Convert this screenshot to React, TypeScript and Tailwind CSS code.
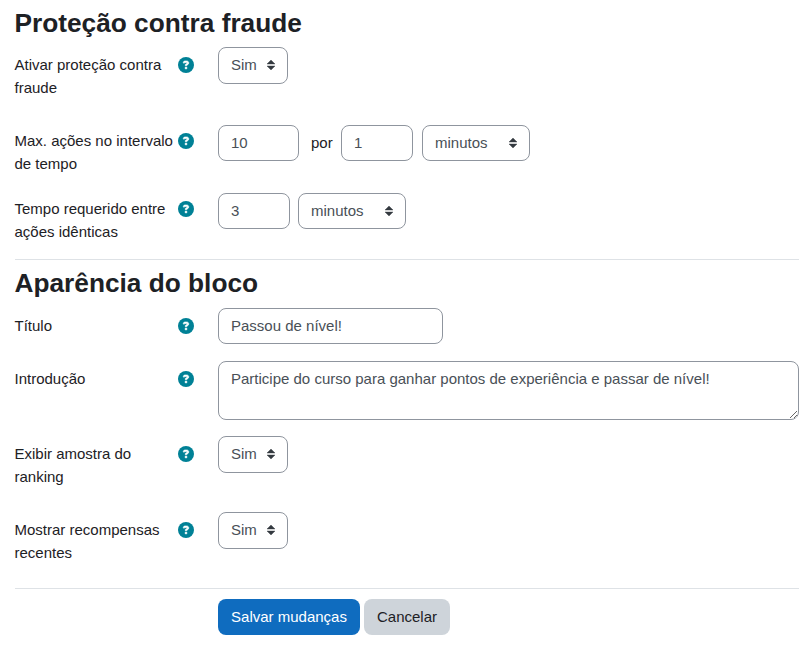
import React from "react";

const control =
  "h-[36px] shrink-0 rounded-lg border border-[#8f959e] bg-white px-3 text-[15px] leading-[22px] text-[#495057] outline-none";

function Help() {
  return (
    <svg viewBox="0 0 512 512" className="mt-1 h-4 w-4 shrink-0" aria-label="Ajuda">
      <circle cx="256" cy="256" r="256" fill="#008196" />
      <path
        fill="#fff"
        stroke="#fff"
        strokeWidth="20"
        d="M169.800 165.300c7.900-22.300 29.100-37.300 52.800-37.300h58.300c34.900 0 63.100 28.300 63.100 63.100c0 22.600-12.100 43.500-31.700 54.800L280 264.400c-.2 13-10.900 23.600-24 23.600c-13.300 0-24-10.700-24-24V250.500c0-8.600 4.600-16.500 12.100-20.800l44.300-25.400c4.700-2.700 7.600-7.700 7.600-13.100c0-8.400-6.800-15.100-15.100-15.100H222.600c-3.400 0-6.400 2.100-7.500 5.300l-.4 1.200c-4.400 12.500-18.200 19-30.600 14.600s-19-18.200-14.600-30.600l.3-1.300zM224 352a32 32 0 1 1 64 0 32 32 0 1 1-64 0z"
      />
    </svg>
  );
}

function Select({ value, className }: { value: string; className: string }) {
  return (
    <button type="button" className={`${control} flex items-center justify-between ${className}`}>
      {value}
      <svg viewBox="0 0 4 5" className="h-[10px] w-2 overflow-visible">
        <path fill="#343a40" stroke="#343a40" strokeWidth="0.2" strokeLinejoin="round" d="M2 0 0 2h4zm0 5L0 3h4z" />
      </svg>
    </button>
  );
}

function Row({
  label,
  className,
  labelPad = "pt-[6px]",
  children,
}: {
  label: string[];
  className: string;
  labelPad?: string;
  children: React.ReactNode;
}) {
  return (
    <div className={`flex items-start ${className}`}>
      <div className={`flex w-[203.500px] shrink-0 ${labelPad}`}>
        <div className="w-[163.500px] shrink-0 whitespace-nowrap text-[15px] leading-[23px]">
          {label.map((line) => (
            <div key={line}>{line}</div>
          ))}
        </div>
        <Help />
      </div>
      {children}
    </div>
  );
}

export default function App() {
  return (
    <main className="h-[653px] w-[811px] overflow-hidden bg-white pl-[14.500px] pr-3 font-['Liberation_Sans',Arial,sans-serif] text-[15px] text-[#1d2125]">
      <section className="h-[260px] border-b border-[#dee2e6] pt-[7px]">
        <h2 className="h-10 text-[26.250px] font-bold leading-8">Proteção contra fraude</h2>
        <Row label={["Ativar proteção contra", "fraude"]} className="h-[76px]">
          <Select value="Sim" className="h-[37px] w-[70px] pb-px" />
        </Row>
        <Row label={["Max. ações no intervalo", "de tempo"]} className="h-[70px]">
          <input aria-label="Ações" defaultValue="10" className={`${control} mt-[2px] w-[81px] pb-[2px]`} />
          <span className="ml-3 mt-[8px] w-[30px] leading-[23px]">por</span>
          <input aria-label="Intervalo" defaultValue="1" className={`${control} mt-[2px] w-[72px] pb-[2px]`} />
          <Select value="minutos" className="ml-[9px] mt-[2px] w-[108px]" />
        </Row>
        <Row label={["Tempo requerido entre", "ações idênticas"]} className="h-[60px]" labelPad="pt-1">
          <input aria-label="Tempo" defaultValue="3" className={`${control} w-[72px] pb-[2px]`} />
          <Select value="minutos" className="ml-2 w-[108px]" />
        </Row>
      </section>
      <section className="h-[329px] border-b border-[#dee2e6] pt-[7px]">
        <h2 className="h-[41px] text-[26.250px] font-bold leading-8">Aparência do bloco</h2>
        <Row label={["Título"]} className="h-[53px]">
          <input aria-label="Título" defaultValue="Passou de nível!" className={`${control} w-[225px] pb-[2px]`} />
        </Row>
        <Row label={["Introdução"]} className="h-[75px]">
          <textarea
            aria-label="Introdução"
            defaultValue="Participe do curso para ganhar pontos de experiência e passar de nível!"
            className="h-[59px] w-[581px] shrink-0 resize rounded-lg border border-[#8f959e] px-3 py-[5px] text-[15px] leading-[23px] text-[#495057] outline-none"
          />
        </Row>
        <Row label={["Exibir amostra do", "ranking"]} className="h-[76px]">
          <Select value="Sim" className="h-[37px] w-[70px] pb-px" />
        </Row>
        <Row label={["Mostrar recompensas", "recentes"]} className="h-[76px]">
          <Select value="Sim" className="h-[37px] w-[70px] pb-px" />
        </Row>
      </section>
      <div className="ml-[203.500px] flex gap-1 pt-[10px]">
        <button type="button" className="h-9 w-[142px] rounded-lg bg-[#0f6cbf] text-white">Salvar mudanças</button>
        <button type="button" className="h-9 w-[86px] rounded-lg bg-[#ced4da]">Cancelar</button>
      </div>
    </main>
  );
}
